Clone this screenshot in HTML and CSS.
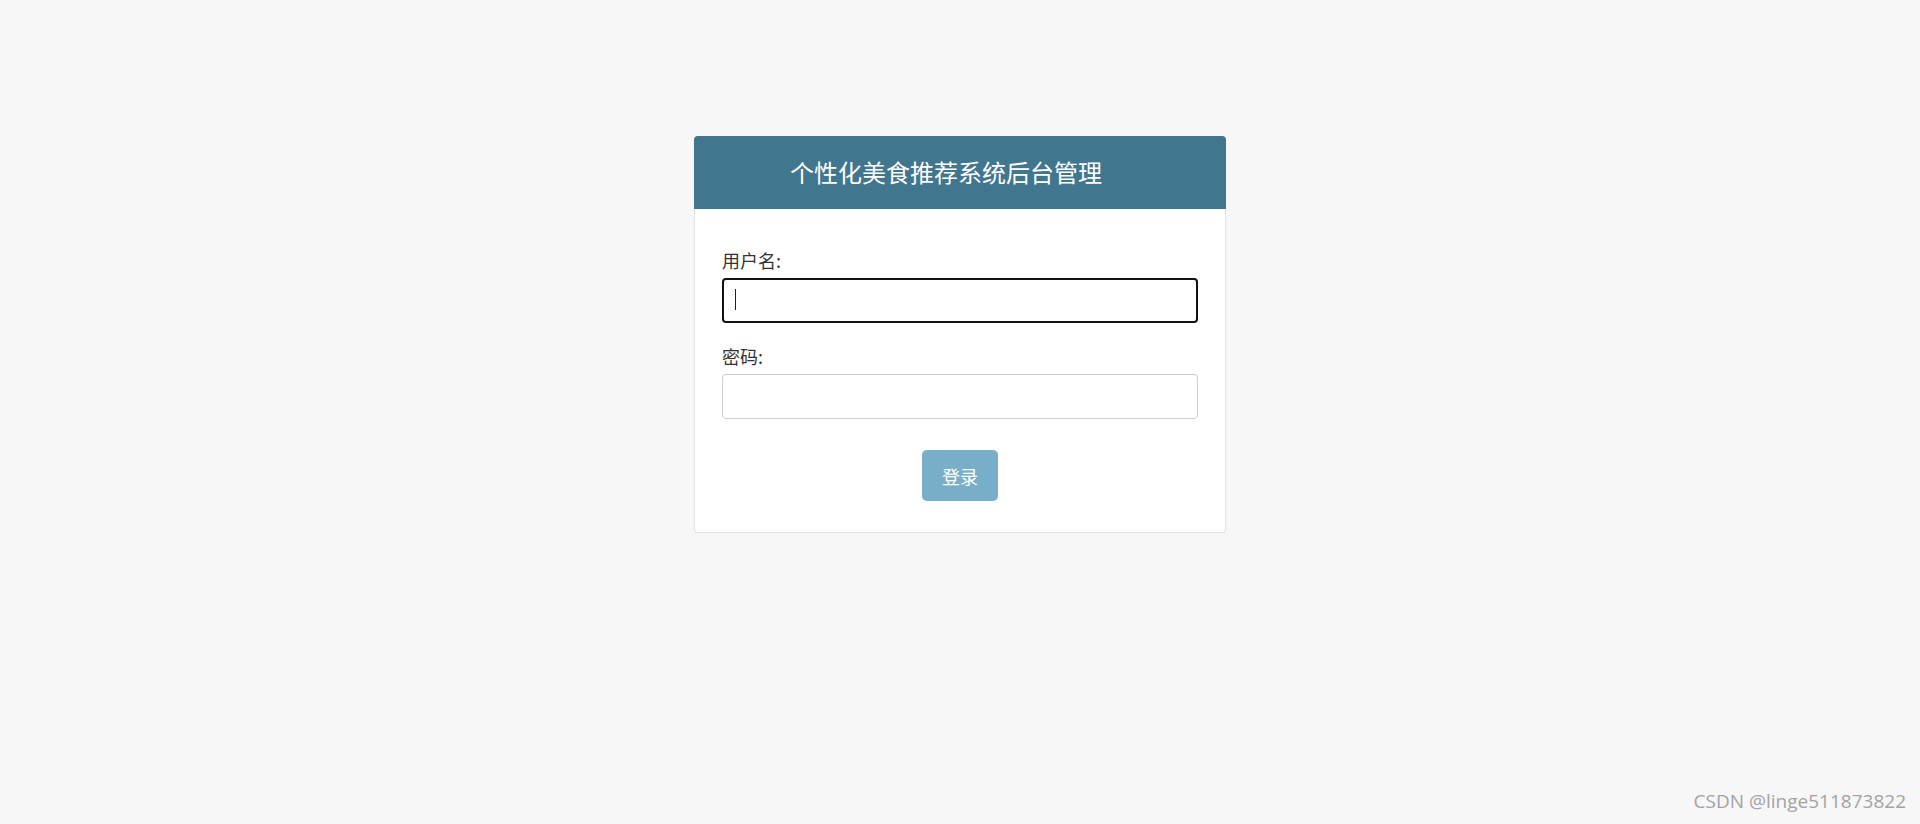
FILE: index.html
```html
<!DOCTYPE html>
<html lang="zh-CN">
<head>
<meta charset="utf-8">
<title>个性化美食推荐系统后台管理</title>
<link rel="stylesheet" href="styles.css">
</head>
<body>
<div class="page">
  <div class="card">
    <div class="card-header">个性化美食推荐系统后台管理</div>
    <form class="card-body">
      <div class="field">
        <label class="label">用户名:</label>
        <div class="input-wrap">
          <input class="input input-focused" type="text">
          <span class="caret"></span>
        </div>
      </div>
      <div class="field">
        <label class="label">密码:</label>
        <div class="input-wrap">
          <input class="input" type="password">
        </div>
      </div>
      <div class="actions">
        <button class="btn" type="button">登录</button>
      </div>
    </form>
  </div>
</div>
<div class="watermark">CSDN @linge511873822</div>
</body>
</html>
```

FILE: styles.css
```css
html, body {
  margin: 0;
  padding: 0;
  height: 100%;
}
body {
  background: #f7f7f7;
  font-family: "Noto Sans CJK SC", "Microsoft YaHei", sans-serif;
  color: #333;
  overflow: hidden;
}
.page {
  padding-top: 136px;
  display: flex;
  justify-content: center;
}
.card {
  width: 532px;
  display: flex;
  flex-direction: column;
}
.card-header {
  height: 73px;
  line-height: 72px;
  background: #41768f;
  color: #ffffff;
  font-size: 24px;
  text-align: center;
  padding-right: 28px;
  border-radius: 4px 4px 0 0;
}
.card-body {
  margin: 0;
  background: #ffffff;
  border: 1px solid #e3e3e3;
  border-top: none;
  border-radius: 0 0 4px 4px;
  padding: 38px 27px 31px;
  display: flex;
  flex-direction: column;
  gap: 20px;
}
.field {
  display: flex;
  flex-direction: column;
  gap: 5px;
}
.label {
  font-size: 18px;
  line-height: 26px;
  height: 26px;
  color: #333;
}
.input-wrap {
  position: relative;
}
.input {
  display: block;
  box-sizing: border-box;
  width: 100%;
  height: 45px;
  margin: 0;
  padding: 0 12px;
  border: 1px solid #cccccc;
  border-radius: 4px;
  background: #ffffff;
  font-size: 18px;
  outline: none;
}
.input-focused {
  border: 2px solid #111111;
}
.caret {
  position: absolute;
  left: 13px;
  top: 11px;
  width: 1px;
  height: 21px;
  background: #222;
}
.actions {
  display: flex;
  justify-content: center;
  padding-top: 11px;
}
.btn {
  width: 76px;
  height: 51px;
  padding: 0;
  border: none;
  border-radius: 5px;
  background: #78aec8;
  color: #ffffff;
  font-family: "Noto Sans CJK SC", "Microsoft YaHei", sans-serif;
  font-size: 18px;
  cursor: pointer;
}
.watermark {
  position: absolute;
  right: 14px;
  bottom: 10px;
  font-family: "Open Sans", "Noto Sans", sans-serif;
  font-size: 19px;
  color: #a3a3a3;
  line-height: 26px;
}
```
